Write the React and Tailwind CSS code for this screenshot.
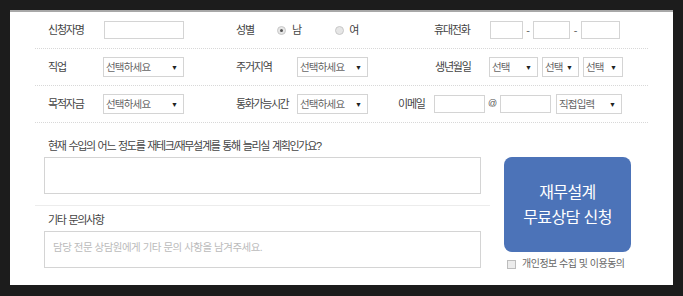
import React from 'react';

const font = "font-['Liberation_Sans','Noto_Sans_CJK_KR',sans-serif]";

function Box({ w }) {
  return <div className={`${w} h-[18px] border border-[#d4d4d4] bg-white`}></div>;
}

function Select({ w, text = '선택하세요' }) {
  return (
    <div className={`${w} h-[20px] border border-[#d4d4d4] bg-white flex items-center justify-between pl-[2px] pr-[5px]`}>
      <span className="text-[10.5px] text-[#666] leading-none tracking-[-0.8px] whitespace-nowrap">{text}</span>
      <span className="text-[7px] text-[#222] leading-none">▼</span>
    </div>
  );
}

function Radio({ checked }) {
  return (
    <span className="w-[9px] h-[9px] rounded-full border border-[#c8c8c8] bg-[#e6e6e6] flex items-center justify-center">
      {checked && <span className="w-[3px] h-[3px] rounded-full bg-[#555]"></span>}
    </span>
  );
}

function Label({ w, children, className = '' }) {
  return (
    <div className={`${w} text-[11px] text-[#444] leading-none tracking-[-1.2px] whitespace-nowrap ${className}`}>
      {children}
    </div>
  );
}

function App() {
  return (
    <div className={`w-[683px] h-[296px] bg-[#1c1c1c] pt-[10px] pl-[10px] ${font}`}>
      <div className="w-[663px] h-[275px] bg-white border-t-2 border-[#a8a8a8] px-[25px]">
        {/* row 1 */}
        <div className="h-[37px] flex items-center pl-[13px] border-b border-dotted border-[#d8d8d8]">
          <Label w="w-[56px]">신청자명</Label>
          <Box w="w-[80px]" />
          <div className="w-[198px] ml-[52px] flex items-center">
            <Label w="w-[41px]">성별</Label>
            <Radio checked />
            <span className="ml-[6px] text-[11px] text-[#444] leading-none">남</span>
            <span className="ml-[33px]"><Radio /></span>
            <span className="ml-[5px] text-[11px] text-[#444] leading-none">여</span>
          </div>
          <Label w="w-[56px]">휴대전화</Label>
          <Box w="w-[33px]" />
          <span className="w-[10px] text-center text-[11px] text-[#666]">-</span>
          <Box w="w-[37px]" />
          <span className="w-[11px] text-center text-[11px] text-[#666]">-</span>
          <Box w="w-[39px]" />
        </div>

        {/* row 2 */}
        <div className="h-[37px] flex items-center pl-[13px] border-b border-dotted border-[#d8d8d8]">
          <Label w="w-[55px]">직업</Label>
          <Select w="w-[81px]" />
          <Label w="w-[61px]" className="ml-[52px]">주거지역</Label>
          <Select w="w-[71px]" />
          <Label w="w-[54px]" className="ml-[67px]">생년월일</Label>
          <Select w="w-[49px]" text="선택" />
          <div className="w-[4px]"></div>
          <Select w="w-[37px]" text="선택" />
          <div className="w-[4px]"></div>
          <Select w="w-[40px]" text="선택" />
        </div>

        {/* row 3 */}
        <div className="h-[37px] flex items-center pl-[13px] border-b border-dotted border-[#d8d8d8]">
          <Label w="w-[55px]">목적자금</Label>
          <Select w="w-[81px]" />
          <Label w="w-[61px]" className="ml-[52px] tracking-[-1.4px]">통화가능시간</Label>
          <Select w="w-[71px]" />
          <Label w="w-[36px]" className="ml-[30px]">이메일</Label>
          <Box w="w-[51px]" />
          <span className="w-[15px] text-center text-[9px] text-[#555]">@</span>
          <Box w="w-[51px]" />
          <div className="w-[5px]"></div>
          <Select w="w-[66px]" text="직접입력" />
        </div>

        {/* bottom */}
        <div className="flex">
          <div className="w-[455px]">
            <div className="pt-[16px] pl-[13px] h-[34px] text-[11px] text-[#444] leading-[14px] tracking-[-1.3px] [word-spacing:1px] whitespace-nowrap">
              현재 수입의 어느 정도를 재테크/재무설계를 통해 늘리실 계획인가요?
            </div>
            <div className="ml-[9px] w-[437px] h-[37px] border border-[#d4d4d4]"></div>
            <div className="mt-[11px] border-b border-[#ececec]"></div>
            <div className="pt-[7px] pl-[13px] h-[25px] text-[11px] text-[#444] leading-[14px] tracking-[-1.3px] [word-spacing:1px]">
              기타 문의사항
            </div>
            <div className="ml-[9px] w-[437px] h-[37px] border border-[#d4d4d4] pl-[8px] pt-[10px] text-[10.5px] text-[#bbb] leading-none tracking-[-0.5px] whitespace-nowrap">
              담당 전문 상담원에게 기타 문의 사항을 남겨주세요.
            </div>
          </div>
          <div className="ml-[14px] pt-[34px]">
            <div className="w-[127px] h-[95px] rounded-[8px] bg-[#4c73b8] flex flex-col items-center justify-center text-white text-[16px] leading-[25px] tracking-[-0.6px]">
              <span>재무설계</span>
              <span>무료상담 신청</span>
            </div>
            <div className="mt-[7px] ml-[3px] flex items-center">
              <span className="w-[9px] h-[9px] border border-[#bdbdbd] bg-[#ececec]"></span>
              <span className="ml-[6px] text-[10px] text-[#666] leading-none tracking-[-0.5px] whitespace-nowrap">개인정보 수집 및 이용동의</span>
            </div>
          </div>
        </div>
      </div>
    </div>
  );
}

export default App;
